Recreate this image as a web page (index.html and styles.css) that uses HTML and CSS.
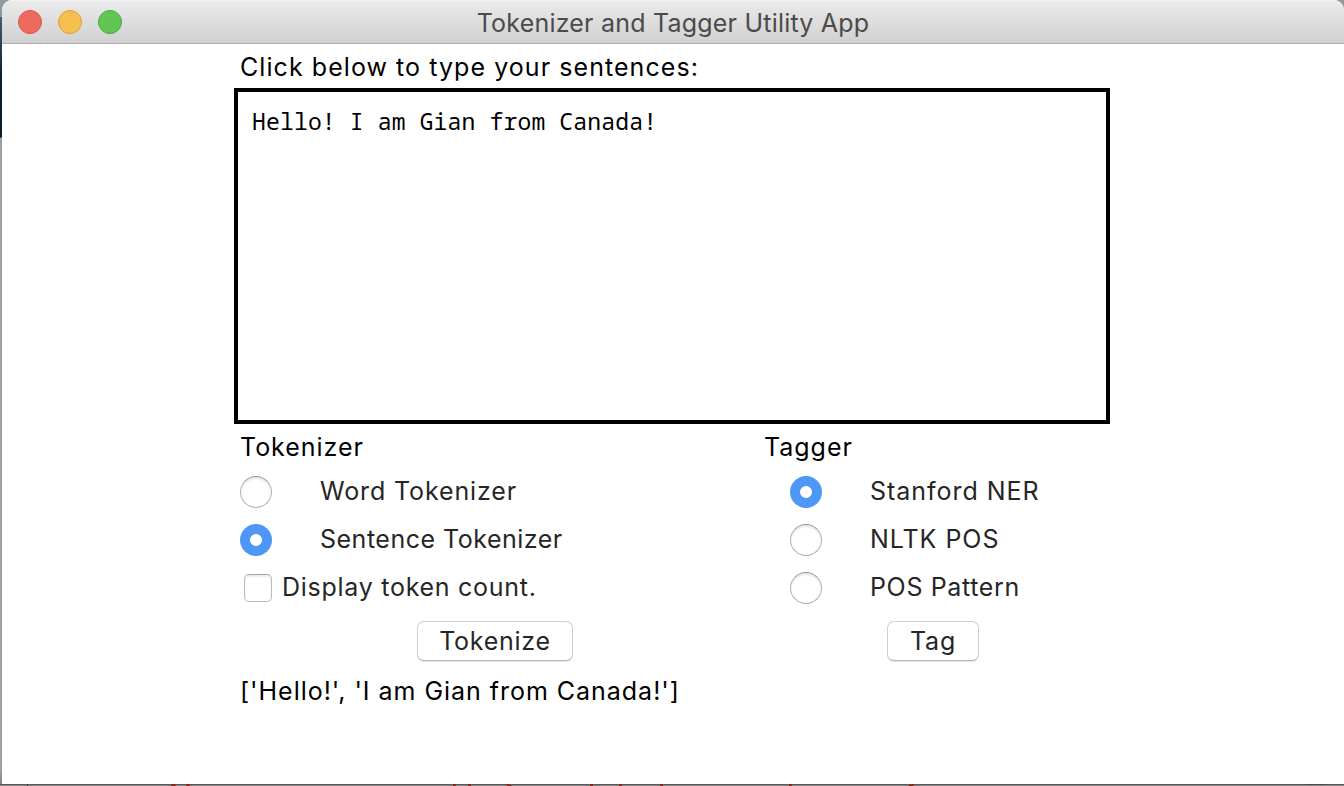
FILE: index.html
```html
<!DOCTYPE html>
<html lang="en">
<head>
<meta charset="utf-8">
<title>Tokenizer and Tagger Utility App</title>
<link rel="stylesheet" href="styles.css">
</head>
<body>
<div class="window">
  <header class="titlebar">
    <div class="lights"><span class="light red"></span><span class="light yellow"></span><span class="light green"></span></div>
    <h1 class="title"><span>Tokenizer and Tagger Utility App</span></h1>
  </header>
  <main class="content">
    <p class="label prompt"><span>Click below to type your sentences:</span></p>
    <div class="editor"><span>Hello! I am Gian from Canada!</span></div>
    <div class="panels">
      <section class="panel tokenizer">
        <h2 class="label"><span class="w-tokenizer">Tokenizer</span></h2>
        <div class="option"><i class="radio"></i><span class="w-word">Word Tokenizer</span></div>
        <div class="option"><i class="radio on"></i><span class="w-sentence">Sentence Tokenizer</span></div>
        <div class="option check"><i class="checkbox"></i><span class="w-display">Display token count.</span></div>
        <button class="button tokenize"><span>Tokenize</span></button>
      </section>
      <section class="panel tagger">
        <h2 class="label"><span class="w-tagger">Tagger</span></h2>
        <div class="option"><i class="radio on"></i><span class="w-stanford">Stanford NER</span></div>
        <div class="option"><i class="radio"></i><span class="w-nltk">NLTK POS</span></div>
        <div class="option"><i class="radio"></i><span class="w-pattern">POS Pattern</span></div>
        <button class="button tag"><span>Tag</span></button>
      </section>
    </div>
    <p class="label result"><span>['Hello!', 'I am Gian from Canada!']</span></p>
  </main>
</div>
<footer class="backdrop">
  <svg width="1344" height="2" viewBox="0 0 1344 2">
    <path fill="#8f2419" d="M172 0h5l-2 2h-4zM187 0h4l-2 2h-3zM453 0h3v2h-3zM468 0h3v2h-3zM505 0h4l3 2h-4zM590 0h3v2h-3zM619 0h3v2h-3zM660 0h3v2h-3zM789 0h3v2h-3zM911 0h4l-2 2h-5z"/>
    <path fill="#484a4b" d="M27 0h1v2h-1zM1306 0h20v1h-20z"/>
  </svg>
</footer>
</body>
</html>
```
FILE: styles.css
```css
* { box-sizing: border-box; }
body {
  margin: 0;
  width: 1344px;
  height: 786px;
  overflow: hidden;
  padding-left: 2px;
  background: linear-gradient(#8f9a9e 0 17px, #4c5b68 17px, #10202c 75px, #061c2b 137px, #a0a0a0 138px 770px, #808080);
  font: 25px/32px Inter, "Open Sans", sans-serif;
  color: #000;
}
.window {
  height: 784px;
  background: #fff;
  border-radius: 10px 10px 0 0;
  overflow: hidden;
}
.titlebar {
  display: grid;
  grid-template-columns: 1fr auto 1fr;
  align-items: center;
  height: 44px;
  background: linear-gradient(#f6f6f6 0, #eaeaea 2px, #d1d1d1 42px);
  border-bottom: 1px solid #b1b1b1;
}
.lights { display: flex; gap: 16px; padding: 1px 0 0 16px; }
.light { width: 24px; height: 24px; border-radius: 50%; border: 1px solid; }
.red { background: #ee6a5f; border-color: #d8554c; }
.yellow { background: #f5bf4f; border-color: #d9a03c; }
.green { background: #61c654; border-color: #4ba73f; }
.title { margin: 3px 0 0; font-size: 25px; font-weight: 400; letter-spacing: 0.21px; color: #4b4b4b; }
.content { width: 876px; margin-left: 232px; }
.label { margin: 0; font-size: 25px; font-weight: 400; letter-spacing: 0.97px; padding-left: 6px; }
.prompt { padding-top: 7px; height: 44px; letter-spacing: 1.06px; }
.editor {
  height: 336px;
  border: 4px solid #000;
  padding: 13px 14px;
  font: 23px/32px "Noto Sans Mono", "DejaVu Sans Mono", monospace;
  letter-spacing: 0.17px;
}
.panels { display: grid; grid-template-columns: 524px 352px; }
.panel { display: flex; flex-direction: column; align-items: flex-start; padding-top: 7px; }
.panel .label { height: 37px; }
.option { display: flex; align-items: center; height: 48px; padding-left: 6px; color: #262626; }
.option span { margin-top: -2px; }
.w-word { letter-spacing: 0.87px; }
.w-sentence { letter-spacing: 0.5px; }
.w-display { letter-spacing: 0.73px; }
.w-stanford, .w-nltk { letter-spacing: 0.97px; }
.w-pattern { letter-spacing: 0.65px; }
.tagger .option { padding-left: 32px; }
.radio { width: 32px; height: 32px; margin-right: 48px; border-radius: 50%; border: 1px solid #b4b4b4; border-top-color: #999; box-shadow: inset 0 2px 2px #e8e8e8; }
.radio.on { border: 0; box-shadow: none; background: radial-gradient(circle, #fff 5.5px, #4f97f7 6.3px); }
.option.check { padding-left: 10px; }
.checkbox { width: 28px; height: 28px; margin-right: 10px; border-radius: 5px; border: 1px solid #b9b9b9; border-top-color: #a5a5a5; box-shadow: inset 0 2px 2px #eee; }
.button {
  height: 40px;
  margin-top: 9px;
  padding: 0;
  border: 1px solid #cfcfcf;
  border-bottom-color: #b5b5b5;
  border-radius: 7px;
  background: #fff;
  box-shadow: 0 1px 1px #e6e6e6;
  font: inherit;
  letter-spacing: 0.75px;
  color: #262626;
}
.tokenize { width: 156px; margin-left: 183px; }
.tag { width: 92px; margin-left: 129px; }
.result { padding-top: 14px; }
.backdrop { height: 2px; margin-left: -2px; background: linear-gradient(#58595a 50%, #858585 50%); }
.backdrop svg { display: block; }
```
